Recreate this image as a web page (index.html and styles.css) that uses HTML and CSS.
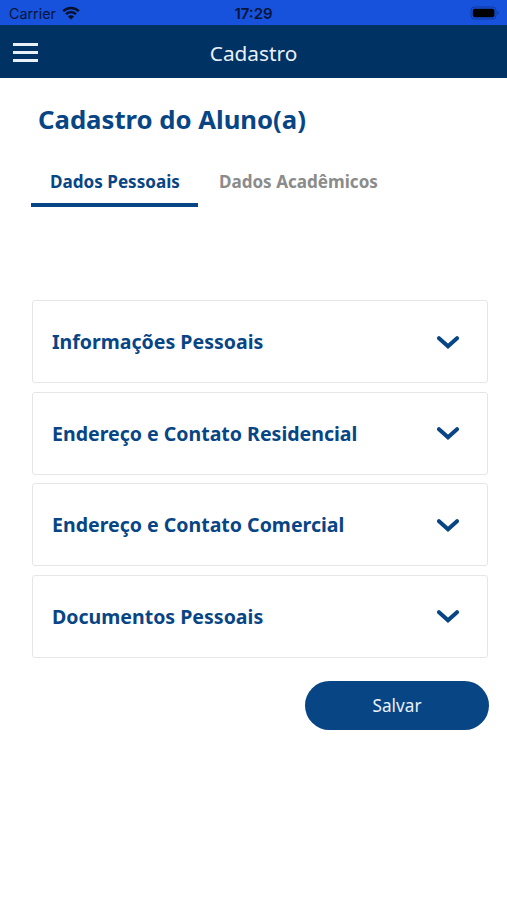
FILE: index.html
```html
<!DOCTYPE html>
<html lang="pt-BR">
<head>
    <meta charset="UTF-8">
    <meta name="viewport" content="width=device-width, initial-scale=1.0">
    <title>Cadastro</title>
    <link rel="stylesheet" href="styles.css">
</head>
<body>
    <div class="status-bar">
        <div class="carrier">
            <span>Carrier</span>
            <svg class="wifi" viewBox="0 0 18 14">
                <path d="M1.2 5.2a11.2 11.2 0 0 1 15.6 0M4 8.2a7.1 7.1 0 0 1 10 0" />
                <path class="wifi-dot" d="M9 13.6L5.9 10.5a4.4 4.4 0 0 1 6.2 0z" />
            </svg>
        </div>
        <div class="time">17:29</div>
        <div class="battery-side">
            <svg class="battery" viewBox="0 0 30 14">
                <rect class="battery-shell" x="1" y="1" width="25" height="12" rx="3.5" />
                <rect x="2.8" y="2.8" width="21.6" height="8.4" rx="1.8" />
                <path class="battery-tip" d="M27.5 5v4c1.6-.6 1.6-3.4 0-4z" />
            </svg>
        </div>
    </div>

    <header class="navbar">
        <button class="menu-btn" aria-label="Menu">
            <span></span>
            <span></span>
            <span></span>
        </button>
        <div class="navbar-title">Cadastro</div>
    </header>

    <main class="content">
        <h1>Cadastro do Aluno(a)</h1>

        <nav class="tabs">
            <a class="tab active">Dados Pessoais</a>
            <a class="tab">Dados Acadêmicos</a>
        </nav>

        <div class="accordion">
            <div class="card">
                <span>Informações Pessoais</span>
                <svg class="chevron" viewBox="0 0 22 13"><path d="M2 2.2L11 10.3L20 2.2" /></svg>
            </div>
            <div class="card">
                <span>Endereço e Contato Residencial</span>
                <svg class="chevron" viewBox="0 0 22 13"><path d="M2 2.2L11 10.3L20 2.2" /></svg>
            </div>
            <div class="card">
                <span>Endereço e Contato Comercial</span>
                <svg class="chevron" viewBox="0 0 22 13"><path d="M2 2.2L11 10.3L20 2.2" /></svg>
            </div>
            <div class="card">
                <span>Documentos Pessoais</span>
                <svg class="chevron" viewBox="0 0 22 13"><path d="M2 2.2L11 10.3L20 2.2" /></svg>
            </div>
        </div>

        <button class="save-btn">Salvar</button>
    </main>
</body>
</html>
```
FILE: styles.css
```css
* {
    box-sizing: border-box;
}

body {
    margin: 0;
    min-height: 100vh;
    background-color: #fff;
    font-family: "Noto Sans", "Open Sans", sans-serif;
    color: #084585;
}

.status-bar {
    display: grid;
    grid-template-columns: 1fr auto 1fr;
    align-items: center;
    height: 25px;
    padding: 2px 7px 0 9px;
    background-color: #1652db;
    font-family: Inter, sans-serif;
    font-size: 14.3px;
    color: #06143a;
}

.carrier {
    display: flex;
    align-items: center;
    gap: 6px;
}

.wifi {
    width: 18px;
    height: 14px;
    margin-top: -2px;
    fill: none;
    stroke: #06102c;
    stroke-width: 2.4;
}

.wifi-dot {
    fill: #06102c;
    stroke: none;
}

.time {
    margin-right: 2px;
    font-size: 15px;
    font-weight: 600;
}

.battery-side {
    display: flex;
    justify-content: flex-end;
}

.battery {
    width: 30px;
    height: 14px;
    margin-top: -1px;
}

.battery-shell {
    fill: none;
    stroke: #1038a0;
}

.battery-tip {
    fill: #1038a0;
}

.navbar {
    display: grid;
    grid-template-columns: 60px 1fr 60px;
    align-items: center;
    height: 53px;
    padding-top: 2px;
    background-color: #003264;
}

.menu-btn {
    display: flex;
    flex-direction: column;
    gap: 5px;
    width: 25px;
    margin: 0 0 0 13px;
    padding: 0;
    border: none;
    background: none;
}

.menu-btn span {
    width: 25px;
    height: 3px;
    background-color: #e8f1fa;
}

.navbar-title {
    text-align: center;
    font-size: 20.8px;
    line-height: 28px;
    color: #e8f1fa;
}

.content {
    display: flex;
    flex-direction: column;
    padding: 24px 19px 0 32px;
}

h1 {
    margin: 0 0 0 6px;
    font-size: 25.7px;
    line-height: 36px;
}

.tabs {
    display: flex;
    margin: 26px 0 0 -1px;
}

.tab {
    height: 43px;
    padding: 6px 18px 0 19px;
    border-bottom: 4px solid transparent;
    font-size: 17.1px;
    font-weight: bold;
    line-height: 24px;
    color: #8b8b8b;
}

.tab + .tab {
    padding-left: 21px;
}

.tab.active {
    border-bottom-color: #084585;
    color: #084585;
}

.accordion {
    display: flex;
    flex-direction: column;
    gap: 8.5px;
    margin-top: 93px;
}

.card {
    display: flex;
    align-items: center;
    justify-content: space-between;
    height: 83px;
    padding: 0 27px 0 19px;
    border: 1px solid #e6e6e6;
    border-radius: 3px;
    font-size: 19.55px;
    font-weight: bold;
}

.chevron {
    width: 22px;
    height: 13px;
    margin: 1px 1px 0 0;
    fill: none;
    stroke: #084585;
    stroke-width: 4;
    stroke-linecap: round;
}

.save-btn {
    align-self: flex-end;
    width: 184px;
    height: 49px;
    margin: 23px -1px 0 0;
    border: none;
    border-radius: 25px;
    background-color: #084585;
    font-family: inherit;
    font-size: 17.2px;
    color: #e8f1fa;
}
```
